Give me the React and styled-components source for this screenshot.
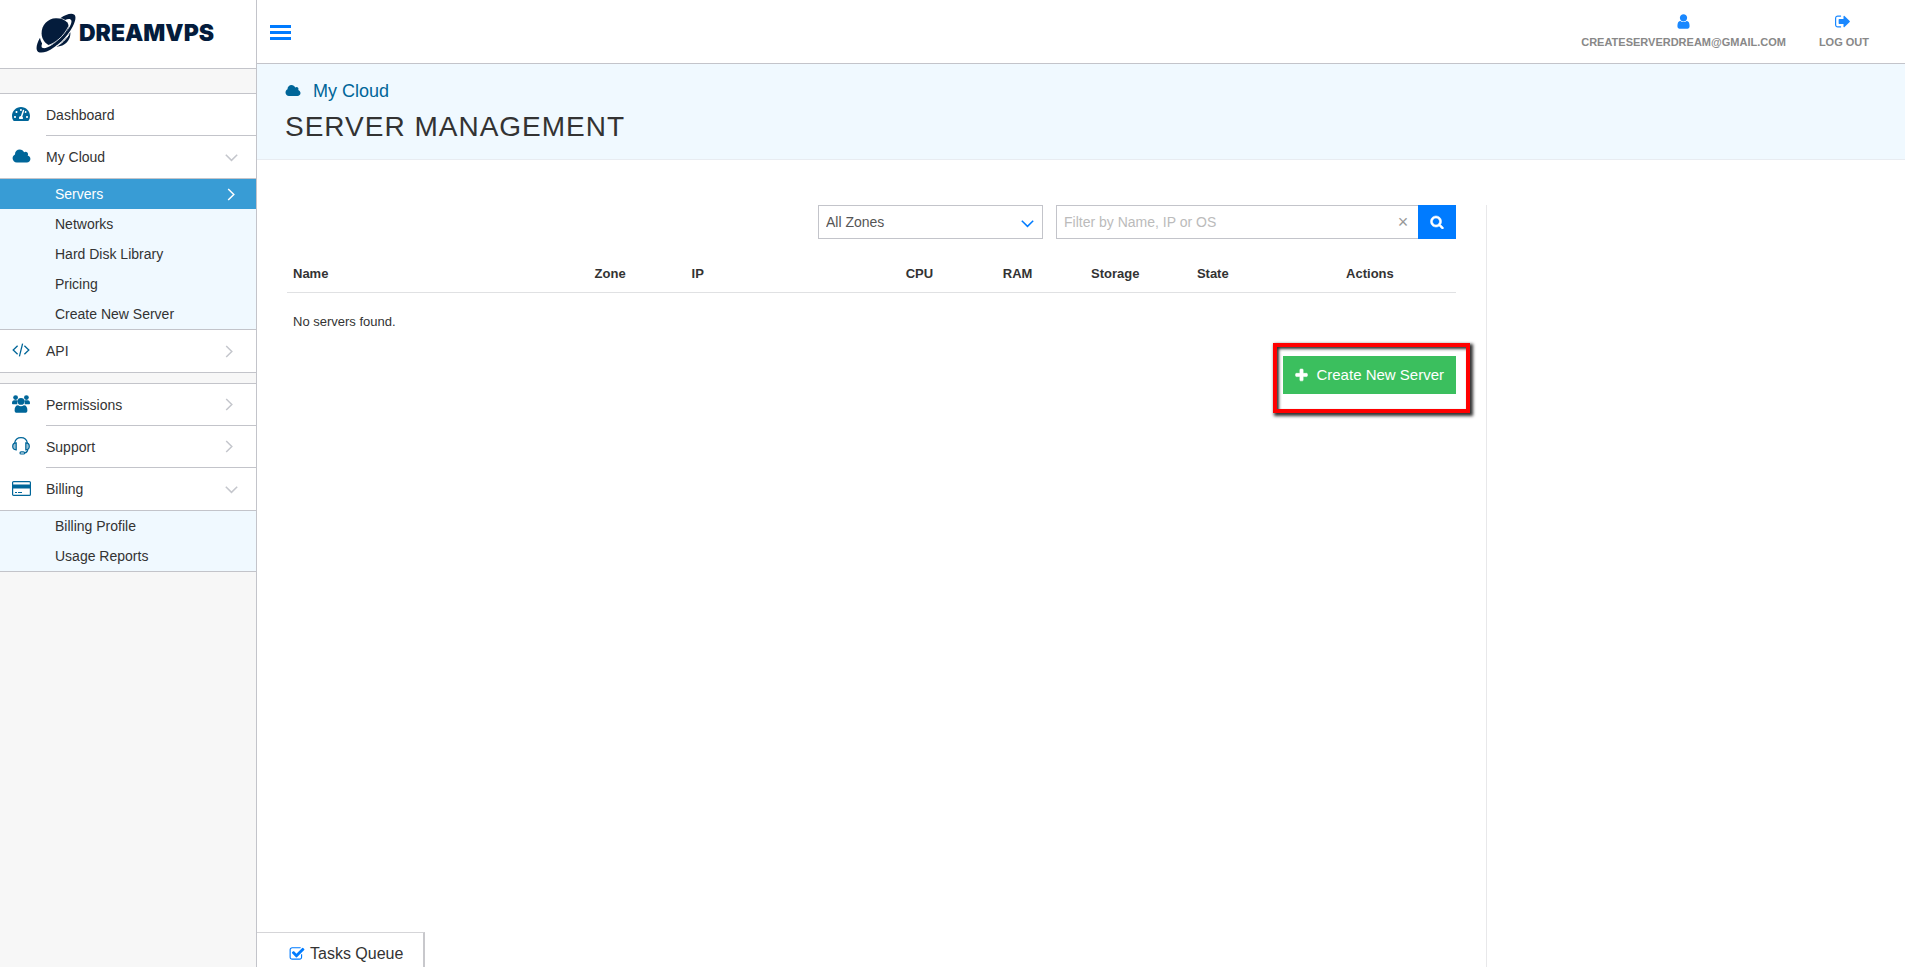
import React from 'react';
import styled, { createGlobalStyle, css } from 'styled-components';
import { FaTachometerAlt } from 'react-icons/fa';

const color = {
  line: '#c3c4ca',
  faint: '#e8e8ea',
  brand: '#006699',
  blue: '#007bff',
  pale: '#f0f9ff',
  active: '#389cd5',
  text: '#333333',
  navy: '#041c3c',
};

const GlobalStyle = createGlobalStyle`
  *, *::before, *::after { box-sizing: border-box; }
  body {
    margin: 0;
    background: #fff;
    color: ${color.text};
    font: 14px/20px "Liberation Sans", Arial, Helvetica, sans-serif;
  }
  ul { list-style: none; margin: 0; padding: 0; }
  a { color: inherit; text-decoration: none; }
  button, input, select { font: inherit; color: inherit; border-radius: 0; }
  button { border: 0; padding: 0; background: none; cursor: pointer; }
  svg { display: block; flex: none; }
`;

/* ---------- icons ---------- */

const Glyph = ({ d, w = 1792, size = 14, bold }) => (
  <svg
    height={size}
    width={Math.round((size * w) / 1792)}
    viewBox={`0 0 ${w} 1792`}
    fill="currentColor"
    stroke="currentColor"
    strokeWidth={bold ? 70 : 0}
    aria-hidden="true"
  >
    <path d={d} />
  </svg>
);

const CLOUD = 'M1984 1152q0 159-112.5 271.5t-271.5 112.5h-1088q-185 0-316.5-131.5t-131.5-316.5q0-132 71-241.5t187-163.5q-2-28-2-43 0-212 150-362t362-150q158 0 286.5 88t187.5 230q70-62 166-62 106 0 181 75t75 181q0 75-41 138 129 30 213 134.5t84 239.5z';
const USER = 'M1536 1399q0 109-62.5 187t-150.5 78h-854q-88 0-150.5-78t-62.5-187q0-85 8.5-160.5t31.5-152 58.5-131 94-89 134.5-34.5q131 128 313 128t313-128q76 0 134.5 34.5t94 89 58.5 131 31.5 152 8.5 160.5zm-256-887q0 159-112.5 271.5t-271.5 112.5-271.5-112.5-112.5-271.5 112.5-271.5 271.5-112.5 271.5 112.5 112.5 271.5z';
const SIGN_OUT = 'M640 1440q0 4 1 20t.5 26.5-3 23.5-10 19.5-20.5 6.5h-320q-119 0-203.5-84.5t-84.5-203.5v-704q0-119 84.5-203.5t203.5-84.5h320q13 0 22.5 9.5t9.5 22.5q0 4 1 20t.5 26.5-3 23.5-10 19.5-20.5 6.5h-320q-66 0-113 47t-47 113v704q0 66 47 113t113 47h312l11.5 1 11.5 3 8 5.5 7 9 2 13.5zm928-544q0 26-19 45l-544 544q-19 19-45 19t-45-19-19-45v-288h-448q-26 0-45-19t-19-45v-384q0-26 19-45t45-19h448v-288q0-26 19-45t45-19 45 19l544 544q19 19 19 45z';
const CHECK = 'M1472 930v318q0 119-84.5 203.5t-203.5 84.5h-832q-119 0-203.5-84.5t-84.5-203.5v-832q0-119 84.5-203.5t203.5-84.5h832q63 0 117 25 15 7 18 23 3 17-9 29l-49 49q-10 10-23 10-3 0-9-2-23-6-45-6h-832q-66 0-113 47t-47 113v832q0 66 47 113t113 47h832q66 0 113-47t47-113v-254q0-13 9-22l64-64q10-10 23-10 6 0 12 3 20 8 20 29zm231-489l-814 814q-24 24-57 24t-57-24l-430-430q-24-24-24-57t24-57l110-110q24-24 57-24t57 24l263 263 647-647q24-24 57-24t57 24l110 110q24 24 24 57t-24 57z';
const PLUS = 'M1600 736v192q0 40-28 68t-68 28h-416v416q0 40-28 68t-68 28h-192q-40 0-68-28t-28-68v-416h-416q-40 0-68-28t-28-68v-192q0-40 28-68t68-28h416v-416q0-40 28-68t68-28h192q40 0 68 28t28 68v416h416q40 0 68 28t28 68z';
const SEARCH = 'M1216 832q0-185-131.5-316.5t-316.5-131.5-316.5 131.5-131.5 316.5 131.5 316.5 316.5 131.5 316.5-131.5 131.5-316.5zm512 832q0 52-38 90t-90 38q-54 0-90-38l-343-342q-179 124-399 124-143 0-273.5-55.5t-225-150-150-225-55.5-273.5 55.5-273.5 150-225 225-150 273.5-55.5 273.5 55.5 225 150 150 225 55.5 273.5q0 220-124 399l343 343q37 37 37 90z';

const CodeIcon = () => (
  <svg width="18" height="14" viewBox="0 0 18 14" fill="none" stroke="currentColor" strokeWidth="1.3" aria-hidden="true">
    <path d="M5.6 2.8 1.2 7l4.400 4.200M12.400 2.800 16.800 7l-4.400 4.200M10.600.6 7.400 13.400" />
  </svg>
);

const PeopleIcon = () => (
  <svg width="18" height="18" viewBox="0 0 18 18" fill="currentColor" aria-hidden="true">
    <circle cx="3.6" cy="2.6" r="2.4" />
    <circle cx="14.4" cy="2.6" r="2.4" />
    <path d="M0 8.200C0 6.200.8 5.200 2.200 5.200h2.600c.6 0 1 .2 1.300.6-.8 1-1 2-.7 3.400H1.200C.4 9.200 0 8.900 0 8.200ZM18 8.200c0-2-.8-3-2.200-3h-2.600c-.6 0-1 .2-1.300.6.8 1 1 2 .7 3.400h4.200c.8 0 1.200-.3 1.200-1Z" />
    <circle cx="9" cy="6.400" r="3.400" />
    <path d="M2.600 15.400c0-3.200 1.200-5.200 3.500-5.200.8.7 1.800 1 2.900 1s2.100-.3 2.900-1c2.300 0 3.500 2 3.500 5.200 0 1.600-.9 2.400-2.300 2.400H4.900c-1.400 0-2.300-.8-2.300-2.400Z" />
  </svg>
);

const HeadsetIcon = () => (
  <svg width="18" height="18" viewBox="0 0 18 18" fill="none" stroke="currentColor" strokeWidth="1.200" aria-hidden="true">
    <path d="M2.600 6.200C3.200 3 5.700.7 9 .7s5.800 2.300 6.400 5.500" />
    <path d="M4.200 5.800v7c-2.200 0-3.500-1.300-3.500-3.500s1.300-3.500 3.500-3.500ZM13.800 5.800v7c2.200 0 3.500-1.300 3.500-3.500s-1.300-3.500-3.500-3.500Z" fill="currentColor" fillOpacity=".4" />
    <path d="M15.800 12.400c-.2 2-1.200 3.300-3.200 3.600" />
    <rect x="8" y="14.800" width="4.600" height="2.200" rx="1.100" />
  </svg>
);

const CardIcon = () => (
  <svg width="19" height="15" viewBox="0 0 19 15" fill="none" stroke="currentColor" aria-hidden="true">
    <rect x=".6" y=".6" width="17.800" height="13.800" rx="1" strokeWidth="1.200" />
    <path d="M1 5.500h17" strokeWidth="4" />
    <path d="M3 11.500h2M6 11.500h4" strokeWidth="1" />
  </svg>
);

const Chevron = ({ down }) => (
  <svg width="13" height="13" viewBox="0 0 13 13" fill="none" stroke="currentColor" strokeWidth="1.500" aria-hidden="true">
    <path d={down ? 'M.8 3.800 6.500 9.400 12.200 3.800' : 'M1.200 1 6.800 6.500 1.200 12'} />
  </svg>
);

const PlanetLogo = () => (
  <svg width="40" height="40" viewBox="0 0 40 40" aria-hidden="true">
    <path
      fill={color.navy}
      d="M24.300 5.300C29.500 1.500 35.300-.2 38 1.500c2.600 1.700 1.500 6.700-1.400 12.300C31.500 23.600 20.400 34.800 10.800 38.400 5.600 40.300 1.500 40 .7 36.400.1 33.500 1.500 29.200 4 24.800c.4 2.300 1.100 4 2.100 5.600-1 2.600-.7 4.300.9 4.700 3.600 1 12.400-4.400 19.200-11.500C31.800 17.800 36 11.200 35.400 7.800c-.5-2.600-3.600-2.200-6.200-.9-1.400-.8-3-1.400-4.900-1.600Z"
    />
    <path fill={color.navy} d="M31.400 9.600c2 3.300 1.300 6.700-1.500 10.700-4.200 5.600-10.200 10.400-17.300 11.900C8.300 29.500 5.800 26 5.600 20.600 5.300 12 12 5.500 19.800 5.300c5-.1 8.900 1.300 11.600 4.300Z" />
    <path fill={color.navy} d="M34.400 19.300c.5 7.600-4.900 14.300-14.200 14.400 5.500-3.700 10.300-8.700 14.200-14.400Z" />
    <path fill="none" stroke="#fff" strokeWidth=".8" d="M11 32.900C19 30.600 27.700 23.500 32.600 13.400" />
    <path fill="none" stroke="#fff" strokeWidth="1" d="M20 33.500c5-2.300 9.500-6.700 13-12" />
  </svg>
);

/* ---------- shell ---------- */

const Shell = styled.div`
  display: flex;
  min-height: 100vh;
`;

const Sidebar = styled.aside`
  flex: 0 0 257px;
  background: #f7f7f7;
  border-right: 1px solid ${color.line};
`;

const Brand = styled.a`
  display: flex;
  align-items: center;
  gap: 3px;
  height: 69px;
  padding: 0 0 2px 36px;
  background: #fff;
  border-bottom: 1px solid ${color.line};
`;

const BrandName = styled.span`
  color: ${color.navy};
  font: 900 23px/28px Inter, "Liberation Sans", sans-serif;
`;

const MenuGroup = styled.ul`
  margin-top: ${(p) => p.$gap}px;
  background: #fff;
  border: solid ${color.line};
  border-width: 1px 0;

  > li:last-child > ul { border-bottom: 0; }
  > li:not(:last-child) > a.closed > span { border-bottom: 1px solid ${color.line}; }
`;

const MenuLink = styled.a`
  display: flex;
  height: 42px;
  padding-left: 12px;
`;

const MenuIcon = styled.i`
  display: flex;
  align-items: center;
  width: 34px;
  height: 40px;
  color: ${color.brand};
`;

const MenuLabel = styled.span`
  flex: 1;
  display: flex;
  align-items: center;
  justify-content: space-between;
  padding-right: 18px;

  svg { color: #c4c6cc; }
`;

const SubMenu = styled.ul`
  background: ${color.pale};
  border: solid ${color.line};
  border-width: 1px 0;
`;

const SubLink = styled.a`
  display: flex;
  align-items: center;
  justify-content: space-between;
  height: 30px;
  padding: 0 16px 0 55px;
  ${(p) => p.$active && css`
    background: ${color.active};
    color: #fff;
  `}
`;

const Main = styled.div`
  flex: 1;
  min-width: 0;
  display: flex;
  flex-direction: column;
`;

const TopBar = styled.header`
  display: flex;
  align-items: center;
  justify-content: space-between;
  height: 64px;
  padding: 0 36px 0 13px;
  border-bottom: 1px solid ${color.line};
`;

const MenuToggle = styled.button`
  display: grid;
  gap: 3px;
  width: 21px;
  padding-top: 2px;

  span {
    height: 3px;
    background: ${color.blue};
  }
`;

const Account = styled.nav`
  display: flex;
  gap: 33px;
`;

const AccountLink = styled.a`
  display: flex;
  flex-direction: column;
  align-items: center;
  gap: 4px;
  color: #888;
  font-size: 11px;
  font-weight: bold;
  line-height: 16px;
  text-transform: uppercase;

  svg { color: #1a88ff; }
`;

const Banner = styled.div`
  height: 96px;
  padding: 16px 28px;
  background: ${color.pale};
  border-bottom: 1px solid #e8ecf1;
`;

const Crumb = styled.a`
  display: flex;
  align-items: center;
  gap: 12px;
  color: ${color.brand};
  font-size: 18px;
  line-height: 22px;
`;

const Title = styled.h1`
  margin: 9px 0 0;
  font-size: 28px;
  font-weight: normal;
  line-height: 32px;
  letter-spacing: 1px;
  text-transform: uppercase;
`;

const Content = styled.main`
  flex: 1;
  display: flex;
  padding: 45px 13px 0 15px;
`;

const Panel = styled.section`
  flex: 0 0 75%;
  padding: 0 30px 0 15px;
  border-right: 1px solid ${color.faint};
`;

/* ---------- filters ---------- */

const Filters = styled.form`
  display: flex;
  justify-content: flex-end;
  gap: 13px;
`;

const ZoneField = styled.label`
  display: grid;
  width: 225px;

  > * { grid-area: 1 / 1; }
  svg {
    align-self: center;
    justify-self: end;
    margin: 2px 9px 0;
    color: ${color.blue};
    pointer-events: none;
  }
`;

const ZoneSelect = styled.select`
  appearance: none;
  height: 34px;
  padding: 0 32px 0 7px;
  border: 1px solid ${color.line};
  background: #fff;
  color: #555;
`;

const SearchField = styled.div`
  display: flex;
  width: 400px;
  height: 34px;
  border: 1px solid ${color.line};
  border-right: 0;
`;

const SearchInput = styled.input`
  flex: 1;
  min-width: 0;
  padding: 0 7px;
  border: 0;
  outline: 0;
  background: none;

  &::placeholder { color: #bbb; opacity: 1; }
`;

const ClearButton = styled.button`
  width: 30px;
  color: #999;
  font-size: 18px;
`;

const SearchButton = styled.button`
  display: grid;
  place-items: center;
  width: 38px;
  height: 34px;
  margin-top: -1px;
  background: ${color.blue};
  color: #fff;
`;

/* ---------- table ---------- */

const ServerTable = styled.table`
  width: 100%;
  margin-top: 15px;
  table-layout: fixed;
  border-collapse: collapse;
  font-size: 13px;
`;

const Th = styled.th`
  width: ${(p) => p.$width};
  height: 38px;
  padding: ${(p) => (p.$indent ? '3px 6px 0 28px' : '3px 6px 0')};
  border-bottom: 1px solid #e0e1e3;
  text-align: ${(p) => p.$align || 'left'};
`;

const Td = styled.td`
  height: 58px;
  padding: 1px 6px 0;
`;

const ActionRow = styled.div`
  display: flex;
  justify-content: flex-end;
  margin-top: 6px;
`;

const Highlight = styled.div`
  position: relative;

  &::after {
    content: '';
    position: absolute;
    inset: -13px -14px -19px -10px;
    border: 4px solid #f00;
    box-shadow: 2px 2px 3px 1px #333, inset 2px 2px 3px #333;
    pointer-events: none;
  }
`;

const CreateButton = styled.button`
  display: flex;
  align-items: center;
  gap: 7px;
  height: 38px;
  padding: 0 12px 0 11px;
  background: #3bbf5e;
  color: #fff;
  font-size: 15px;
`;

const TasksTab = styled.button`
  position: fixed;
  left: 257px;
  bottom: 0;
  display: flex;
  align-items: center;
  gap: 5px;
  height: 35px;
  padding: 7px 20px 0 32px;
  background: #fff;
  border-top: 1px solid #d5d5d8;
  border-right: 2px solid #c8c8cc;
  font-size: 16px;

  svg { color: ${color.blue}; }
`;

/* ---------- data ---------- */

const MENU = [
  {
    gap: 24,
    items: [
      { label: 'Dashboard', icon: <FaTachometerAlt size={18} /> },
      {
        label: 'My Cloud',
        icon: <Glyph d={CLOUD} w={2048} size={17} />,
        children: ['Servers', 'Networks', 'Hard Disk Library', 'Pricing', 'Create New Server'],
      },
      { label: 'API', icon: <CodeIcon />, arrow: true },
    ],
  },
  {
    gap: 10,
    items: [
      { label: 'Permissions', icon: <PeopleIcon />, arrow: true },
      { label: 'Support', icon: <HeadsetIcon />, arrow: true },
      { label: 'Billing', icon: <CardIcon />, children: ['Billing Profile', 'Usage Reports'] },
    ],
  },
];

const COLUMNS = [
  { label: 'Name', width: '25.8%' },
  { label: 'Zone', width: '8.3%' },
  { label: 'IP', width: '15.8%' },
  { label: 'CPU', width: '8.4%', align: 'center' },
  { label: 'RAM', width: '8.4%', align: 'center' },
  { label: 'Storage', width: '8.3%', align: 'center' },
  { label: 'State', width: '8.4%', align: 'center' },
  { label: 'Actions', align: 'center', indent: true },
];

export default function App() {
  return (
    <>
      <GlobalStyle />
      <Shell>
        <Sidebar>
          <Brand href="#home">
            <PlanetLogo />
            <BrandName>DREAMVPS</BrandName>
          </Brand>
          <nav aria-label="Main">
            {MENU.map((group) => (
              <MenuGroup key={group.gap} $gap={group.gap}>
                {group.items.map((item) => (
                  <li key={item.label}>
                    <MenuLink href="#menu" className={item.children ? 'open' : 'closed'}>
                      <MenuIcon>{item.icon}</MenuIcon>
                      <MenuLabel>
                        {item.label}
                        {(item.children || item.arrow) && <Chevron down={!!item.children} />}
                      </MenuLabel>
                    </MenuLink>
                    {item.children && (
                      <SubMenu>
                        {item.children.map((child) => (
                          <li key={child}>
                            <SubLink href="#page" $active={child === 'Servers'}>
                              {child}
                              {child === 'Servers' && <Chevron />}
                            </SubLink>
                          </li>
                        ))}
                      </SubMenu>
                    )}
                  </li>
                ))}
              </MenuGroup>
            ))}
          </nav>
        </Sidebar>

        <Main>
          <TopBar>
            <MenuToggle type="button" aria-label="Toggle menu">
              <span />
              <span />
              <span />
            </MenuToggle>
            <Account aria-label="Account">
              <AccountLink href="#account">
                <Glyph d={USER} size={17} />
                createserverdream@gmail.com
              </AccountLink>
              <AccountLink href="#logout">
                <Glyph d={SIGN_OUT} size={17} />
                Log out
              </AccountLink>
            </Account>
          </TopBar>

          <Banner>
            <Crumb href="#cloud">
              <Glyph d={CLOUD} w={2048} size={14} />
              My Cloud
            </Crumb>
            <Title>Server Management</Title>
          </Banner>

          <Content>
            <Panel>
              <Filters>
                <ZoneField>
                  <ZoneSelect aria-label="Zone" defaultValue="all">
                    <option value="all">All Zones</option>
                  </ZoneSelect>
                  <Chevron down />
                </ZoneField>
                <SearchField>
                  <SearchInput type="text" aria-label="Filter servers" placeholder="Filter by Name, IP or OS" />
                  <ClearButton type="button" aria-label="Clear filter">×</ClearButton>
                  <SearchButton type="button" aria-label="Search">
                    <Glyph d={SEARCH} size={14} bold />
                  </SearchButton>
                </SearchField>
              </Filters>

              <ServerTable>
                <thead>
                  <tr>
                    {COLUMNS.map((c) => (
                      <Th key={c.label} scope="col" $width={c.width} $align={c.align} $indent={c.indent}>
                        {c.label}
                      </Th>
                    ))}
                  </tr>
                </thead>
                <tbody>
                  <tr>
                    <Td colSpan={COLUMNS.length}>No servers found.</Td>
                  </tr>
                </tbody>
              </ServerTable>

              <ActionRow>
                <Highlight>
                  <CreateButton type="button">
                    <Glyph d={PLUS} size={15} bold />
                    Create New Server
                  </CreateButton>
                </Highlight>
              </ActionRow>
            </Panel>
          </Content>
        </Main>

        <TasksTab type="button">
          <Glyph d={CHECK} size={16} />
          Tasks Queue
        </TasksTab>
      </Shell>
    </>
  );
}
